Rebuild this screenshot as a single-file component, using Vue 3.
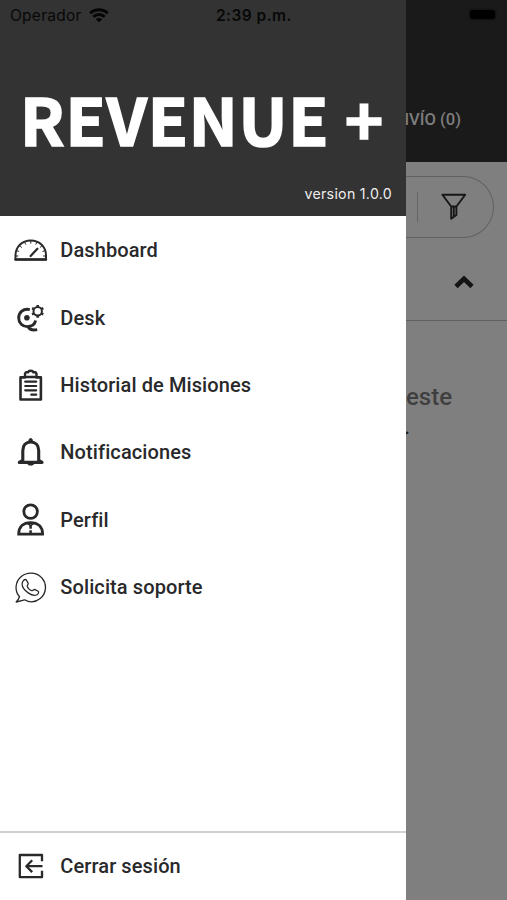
<script setup>
const items = [
  { id: 'dashboard', label: 'Dashboard' },
  { id: 'desk', label: 'Desk' },
  { id: 'history', label: 'Historial de Misiones' },
  { id: 'bell', label: 'Notificaciones' },
  { id: 'profile', label: 'Perfil' },
  { id: 'support', label: 'Solicita soporte' },
]
</script>

<template>
  <div class="screen">
    <div class="statusbar">
      <span class="carrier">Operador</span>
      <svg class="wifi" viewBox="0 0 20 15" fill="none" stroke="#050505" stroke-width="2.9">
        <path d="M1.2 5.2C6 .6 14 .6 18.8 5.2M4.3 8.7c3.3-3 8.1-3 11.4 0" />
        <path d="M10 14.3 6.8 11.3c1.8-1.6 4.6-1.6 6.4 0z" fill="#050505" stroke="none" />
      </svg>
      <span class="time">2:39 p.m.</span>
      <span class="battery"></span>
    </div>

    <aside class="drawer">
      <header class="brand">
        <h1>REVENUE +</h1>
        <p>version 1.0.0</p>
      </header>
      <nav class="menu">
        <a v-for="item in items" :key="item.id" class="row">
          <svg class="icon" viewBox="0 0 36 36" fill="none" stroke="#29292b" stroke-width="2" stroke-linecap="round" stroke-linejoin="round">
            <template v-if="item.id === 'dashboard'">
              <path d="M3.5 27.5v-4C3.5 14.8 10 8.5 18.8 8.5S34 14.8 34 23.5v4z" />
              <path d="M3.5 27.5h30.5" stroke-width="2.4" />
              <path d="m18.6 24 6.8-7.3" stroke-width="2.2" />
              <path d="M18.8 9v2.2M12.8 10.4l.9 1.8M8 14l1.5 1.3M5 18.7l1.8.7M4 24h2M24.8 10.4l-.9 1.8M29.7 14l-1.5 1.3M32.6 18.7l-1.8.7M33.5 24h-2" stroke-width="1" />
            </template>
            <template v-else-if="item.id === 'desk'">
              <path d="M17.8 9.7C11.2 8 6.7 12.6 6.7 18.1c0 5.1 3.9 8.5 8.5 8.5 4.4 0 7.7-2.3 8.4-6.1M15.8 26.5c1.5 2.9 4.9 4 9.4 3.1" stroke-width="2.9" stroke-linecap="butt" />
              <circle cx="14.9" cy="17.7" r="2.8" fill="#29292b" stroke="none" />
              <circle cx="25.7" cy="11.3" r="4.2" stroke-width="2" />
              <path d="M25.7 6.7V4.9M25.7 15.9v1.8M21.5 8.9l-1.4-.8M29.9 8.9l1.4-.8M21.5 13.7l-1.4.8M29.9 13.7l1.4.8" stroke-width="2.5" stroke-linecap="butt" />
            </template>
            <template v-else-if="item.id === 'history'">
              <path d="M13 10.4H8.5v22.1H28.9V10.4h-4.5" stroke-width="2.6" />
              <path d="M14 5.2h2.2c.4-2 4.6-2 5 0h2.3l1 1.5v2.1l-1 1.2H14l-1-1.2V6.7z" stroke-width="2.4" />
              <path d="M13.2 14.7h11M13.2 19h11M13.2 23.3h11M19.3 27.7h4.9" stroke-width="2.2" />
            </template>
            <template v-else-if="item.id === 'bell'">
              <path d="M10.8 26.4V16.5c0-5.2 3-8.5 7.9-8.5s8 3.3 8 8.5v9.9l3.4 2H7.3z" stroke-width="3.1" />
              <path d="M16.6 7.4c0-4.2 4.2-4.2 4.2 0zM15.2 29.4h7c-.8 2.6-6.2 2.6-7 0z" fill="#29292b" stroke-width=".6" />
            </template>
            <template v-else-if="item.id === 'profile'">
              <circle cx="18.6" cy="9.6" r="6.8" stroke-width="2.8" />
              <path d="M6.7 32.2c0-7.5 4.6-11.6 11.9-11.6s12 4.1 12 11.6z" stroke-width="2.8" stroke-linejoin="miter" />
              <path d="m15 21.2 3.6 2.4 3.6-2.4" stroke-width="1.3" />
              <path d="M18.6 22.5v4.2M18.6 28.3v3.7" stroke-width="2.5" stroke-linecap="butt" />
            </template>
            <template v-else>
              <path d="M7.5 27.7C2.2 21.8 3.2 12.4 9.3 7.4 15.5 2.4 25 3 30.1 9.2c5.2 6.2 4.2 15.4-1.9 20.3-4.7 3.8-10.8 4.1-15.6 1.3L4.2 33c1.6-1.7 2.6-3 3.3-5.3z" stroke-width="1.3" />
              <path d="M11.7 11.2c1.2-1.1 2.4-.9 3 .4l1.4 2.5c.6 1.2-1 2.1-.9 3.1.4 2.1 3 4.2 4.8 4.5 1.2.1 1.9-1.7 3.1-1.1l2.7 1.4c1.6.8.6 3-.8 3.8-2.1 1.2-5.5.4-8.8-1.9-3.5-2.5-6-5.9-6.1-8.7 0-1.7.6-3.1 1.6-4z" stroke-width="1.3" />
            </template>
          </svg>
          <span>{{ item.label }}</span>
        </a>
      </nav>
      <a class="row logout">
        <svg class="icon" viewBox="0 0 36 36" fill="none" stroke="#29292b" stroke-width="2.3" stroke-linejoin="round">
          <path d="M30 13.2V7H7.8v22.2H30V22.8" />
          <path d="M30.5 18.2H14.6M20.2 12.3l-5.9 5.9 5.9 5.9" />
        </svg>
        <span>Cerrar sesión</span>
      </a>
    </aside>

    <main class="behind">
      <div class="tabs"><span>ENVÍO (0)</span></div>
      <div class="filters">
        <div class="pill">
          <i class="divider"></i>
          <svg class="funnel" viewBox="0 0 28 28" fill="none" stroke="#171717" stroke-width="1.9" stroke-linejoin="round">
            <path d="M2.4 1.8h22.8l-8.8 11.7h-5.2zM11.2 13.5v12.2l5.2-3.8v-8.4M13.8 14v9" />
          </svg>
        </div>
        <svg class="chevron" viewBox="0 0 20 14" fill="none" stroke="#141414" stroke-width="4.6">
          <path d="m2 11.5 8-7.7 8 7.7" />
        </svg>
      </div>
      <p class="empty">este<br /><b>.</b></p>
    </main>
  </div>
</template>

<style>
body { background: #7f7f7f; overflow: hidden; }
</style>

<style scoped>
* { box-sizing: border-box; margin: 0; }
.screen { position: relative; display: flex; width: 507px; height: 900px; overflow: hidden; font-family: Roboto, sans-serif; background: #7f7f7f; }
.statusbar { position: absolute; z-index: 2; inset: 0 0 auto; height: 30px; display: grid; grid-template-columns: 79px 127px 1fr auto; align-items: center; padding: 0 10px; color: #080808; font: 15.5px Inter, sans-serif; }
.carrier { letter-spacing: .25px; white-space: nowrap; }
.wifi { width: 20px; height: 15px; }
.time { font-weight: 600; letter-spacing: .45px; }
.battery { width: 25px; height: 9px; margin: -2px 2px 0 0; border-radius: 3px; background: #000; box-shadow: 0 0 0 1.5px #131313; }
.drawer { position: relative; z-index: 1; display: flex; flex-direction: column; flex: 0 0 406px; background: #fff; }
.brand { flex: 0 0 216px; display: flex; flex-direction: column; padding: 78px 14px 0 20px; background: #333; color: #fff; }
.brand h1 { height: 80px; font: 700 65.4px/80px "Noto Sans CJK JP", sans-serif; -webkit-text-stroke: 1.6px #fff; letter-spacing: .8px; white-space: nowrap; }
.brand p { margin-top: 26px; text-align: right; font: 14.2px/20px Inter, sans-serif; letter-spacing: .28px; color: #eee; }
.menu { flex: 1; padding-top: .5px; }
.row { display: flex; align-items: center; gap: 12.3px; height: 67.4px; padding-left: 12px; color: #29292b; font-size: 20px; font-weight: 500; letter-spacing: .1px; }
.icon { width: 36px; height: 36px; flex: none; }
.logout { height: 69px; padding-bottom: 2px; border-top: 2px solid #d0d2d2; }
.behind { flex: 1; min-width: 0; background: #7f7f7f; }
.tabs { display: flex; justify-content: flex-end; height: 162px; padding: 110px 46px 0 0; background: #1a1a1a; color: #7d7d7d; font-size: 16.6px; font-weight: 500; line-height: 20px; white-space: nowrap; }
.tabs span { margin-left: -40px; }
.filters { display: flex; flex-direction: column; height: 159px; padding-top: 14px; border-bottom: 1px solid #606060; }
.pill { display: flex; align-items: center; width: 88px; height: 62px; border: 1px solid #616161; border-left: 0; border-radius: 0 31px 31px 0; }
.divider { width: 1px; height: 30px; margin-left: 11px; background: #646464; }
.funnel { width: 28px; height: 28px; margin-left: 22px; }
.chevron { width: 20px; height: 14px; margin: 37px 0 0 48px; }
.empty { padding-top: 60px; color: #3f3f3f; font-size: 24px; font-weight: 500; line-height: 32px; }
.empty b { display: inline-block; margin: -4px 0 0 -2px; font-weight: 400; color: #202020; transform: translateY(-3px); }
</style>
